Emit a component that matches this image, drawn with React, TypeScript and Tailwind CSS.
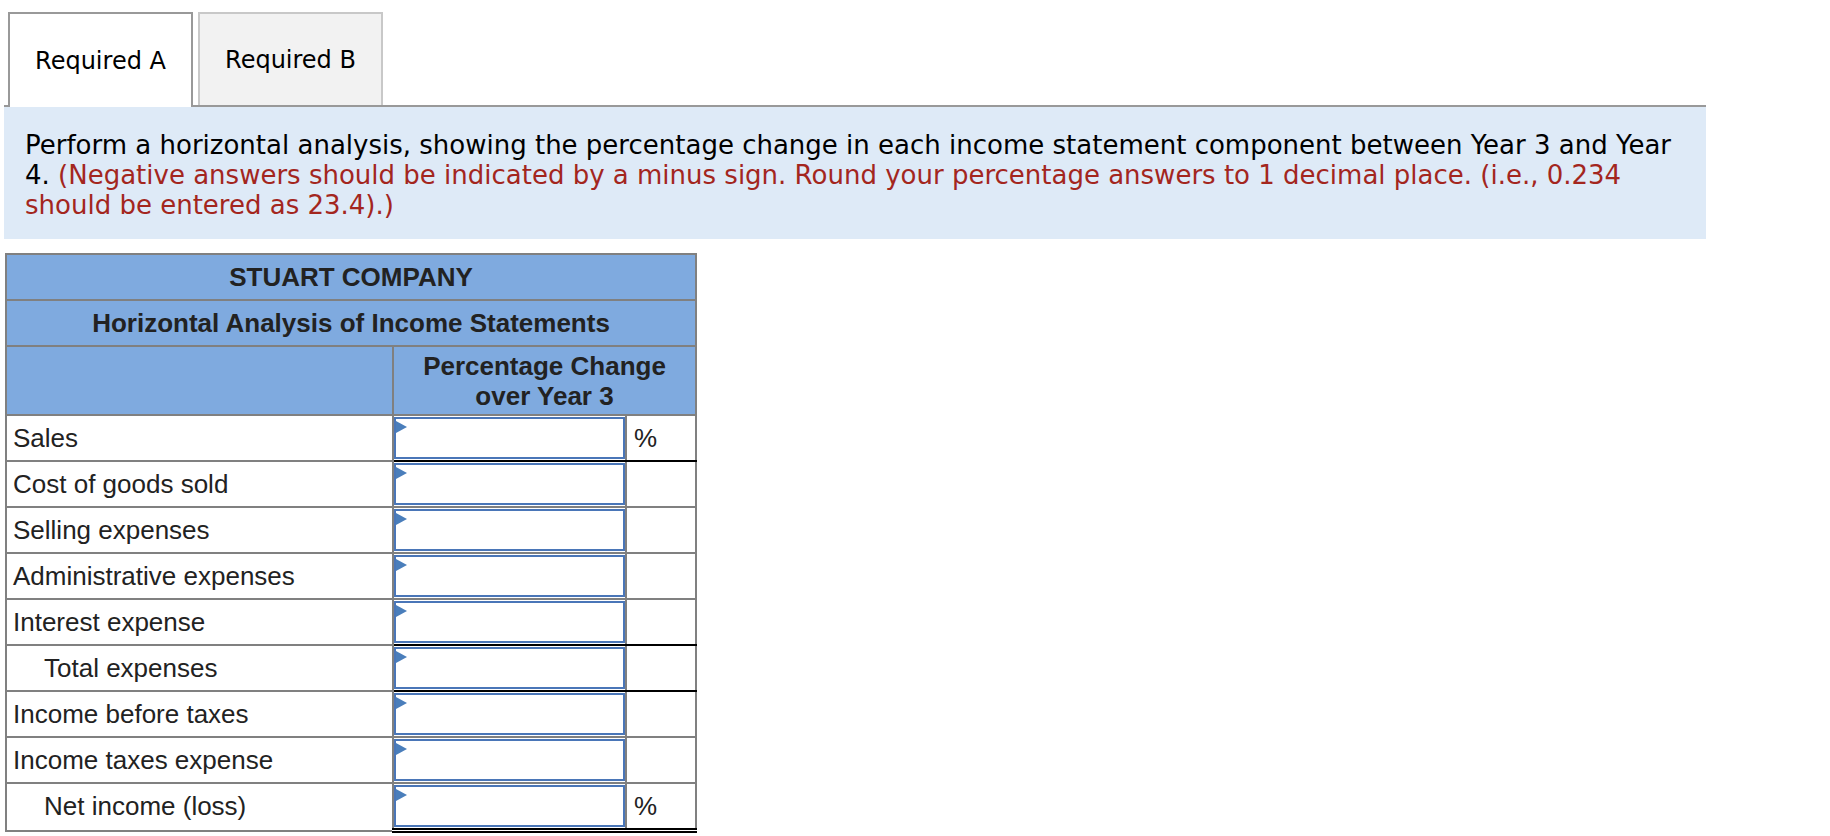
const rows = [
  { label: "Sales", pct: true, line: "single" },
  { label: "Cost of goods sold" },
  { label: "Selling expenses" },
  { label: "Administrative expenses" },
  { label: "Interest expense", line: "single" },
  { label: "Total expenses", indent: true, line: "single" },
  { label: "Income before taxes" },
  { label: "Income taxes expense", line: "single" },
  { label: "Net income (loss)", indent: true, pct: true, line: "double" },
];

const verdana = { fontFamily: '"DejaVu Sans", Verdana, sans-serif' };
const arial = { fontFamily: '"Liberation Sans", Arial, sans-serif' };

const AnswerBox = () => (
  <div className="relative h-[42px] w-full border-2 border-[#4a76b8] bg-white">
    <svg className="absolute left-[0px] top-[2px]" width="11" height="12" viewBox="0 0 11 12">
      <polygon points="0,0 11,6 0,12" fill="#4a7ebb" />
    </svg>
  </div>
);

const App = () => {
  return (
    <div className="min-h-screen bg-white">
      <div className="pt-[12px] pl-[4px] w-[1706px]">
        <div className="flex items-end gap-[5px] pl-[4px] border-b-2 border-[#999999]" style={verdana}>
          <div className="-mb-[2px] flex h-[95px] w-[185px] items-center justify-center border-2 border-b-0 border-[#999999] bg-white text-[24px] text-black">
            Required A
          </div>
          <div className="flex h-[93px] w-[185px] items-center justify-center border-2 border-b-0 border-[#c8c8c8] bg-[#f2f2f2] text-[24px] text-black">
            Required B
          </div>
        </div>

        <div className="bg-[#deeaf7] pl-[21px] pr-[10px] pt-[23px] pb-[19px] text-[26px] leading-[30px] text-black" style={verdana}>
          Perform a horizontal analysis, showing the percentage change in each income statement component between Year 3 and Year 4.{" "}
          <span className="text-[#a3261e]">
            (Negative answers should be indicated by a minus sign. Round your percentage answers to 1 decimal place. (i.e., 0.234 should be entered as 23.4).)
          </span>
        </div>

        <table
          className="mt-[14px] ml-[1px] w-[690px] table-fixed border-collapse text-[26px] text-[#222222]"
          style={arial}
        >
          <colgroup>
            <col className="w-[387px]" />
            <col className="w-[233px]" />
            <col className="w-[70px]" />
          </colgroup>
          <thead>
            <tr>
              <th colSpan={3} className="h-[46px] border-2 border-[#808080] bg-[#7faadf] p-0 text-center font-bold">
                STUART COMPANY
              </th>
            </tr>
            <tr>
              <th colSpan={3} className="h-[46px] border-2 border-[#808080] bg-[#7faadf] p-0 text-center font-bold">
                Horizontal Analysis of Income Statements
              </th>
            </tr>
            <tr>
              <th className="h-[69px] border-2 border-[#808080] bg-[#7faadf] p-0" />
              <th colSpan={2} className="h-[69px] border-2 border-[#808080] bg-[#7faadf] p-0 text-center font-bold leading-[30px]">
                Percentage Change
                <br />
                over Year 3
              </th>
            </tr>
          </thead>
          <tbody>
            {rows.map((row) => {
              const right =
                row.line === "double"
                  ? "border-2 border-b-[5px] border-[#808080] border-b-black border-double"
                  : row.line === "single"
                  ? "border-2 border-[#808080] border-b-black"
                  : "border-2 border-[#808080]";
              return (
                <tr key={row.label}>
                  <td
                    className={
                      row.indent
                        ? "h-[46px] border-2 border-[#808080] py-0 pr-2 pl-[37px] font-normal"
                        : "h-[46px] border-2 border-[#808080] py-0 pr-2 pl-[6px] font-normal"
                    }
                  >
                    {row.label}
                  </td>
                  <td className={right + " h-[46px] px-0 py-[1px] align-middle"}>
                    <AnswerBox />
                  </td>
                  <td className={right + " h-[46px] py-0 pl-[7px]"}>{row.pct ? "%" : ""}</td>
                </tr>
              );
            })}
          </tbody>
        </table>
      </div>
    </div>
  );
};

export default App;
